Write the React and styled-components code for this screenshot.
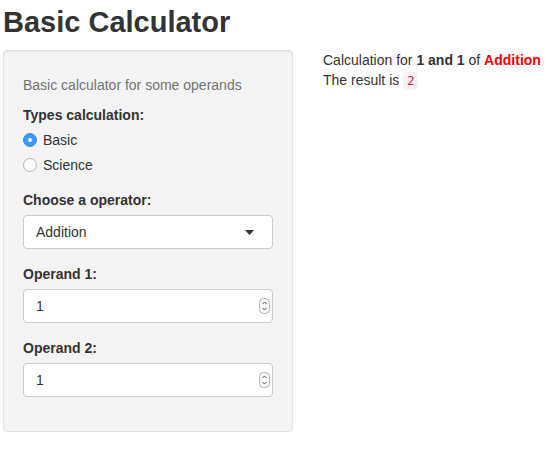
import React from 'react';
import styled, { createGlobalStyle } from 'styled-components';

const GlobalStyle = createGlobalStyle`
  body {
    margin: 0;
    font-family: "Liberation Sans", Arial, sans-serif;
    font-size: 14px;
    line-height: 20px;
    color: #333;
    background: #fff;
  }
`;

const Page = styled.div`
  padding: 6px 0 0 3px;
`;

const Title = styled.h2`
  margin: 0 0 11px;
  font-size: 29px;
  line-height: 33px;
  font-weight: 700;
  color: #333;
`;

const Row = styled.div`
  display: flex;
  align-items: flex-start;
`;

const Well = styled.div`
  width: 290px;
  box-sizing: border-box;
  padding: 19px;
  background: #f4f4f4;
  border: 1px solid #e3e3e3;
  border-radius: 4px;
  box-shadow: inset 0 1px 1px rgba(0, 0, 0, 0.05);
`;

const HelpText = styled.div`
  margin: 5px 0 10px;
  color: #737373;
`;

const FormGroup = styled.div`
  margin-bottom: 15px;
`;

const Label = styled.div`
  font-weight: 700;
  margin-bottom: 5px;
`;

const RadioRow = styled.div`
  display: flex;
  align-items: center;
  gap: 6px;
  margin-top: ${(p) => (p.$first ? '0' : '5px')};
`;

const RadioDot = styled.span`
  width: 14px;
  height: 14px;
  box-sizing: border-box;
  border-radius: 50%;
  display: flex;
  align-items: center;
  justify-content: center;
  background: ${(p) => (p.$checked ? '#3b99fc' : '#fff')};
  border: 1px solid ${(p) => (p.$checked ? '#3b8ee8' : '#b4b4b4')};
  &::after {
    content: '';
    display: ${(p) => (p.$checked ? 'block' : 'none')};
    width: 4px;
    height: 4px;
    border-radius: 50%;
    background: #fff;
  }
`;

const Control = styled.div`
  height: 34px;
  box-sizing: border-box;
  display: flex;
  align-items: center;
  justify-content: space-between;
  padding: 0 ${(p) => p.$padRight}px 0 12px;
  background: #fff;
  border: 1px solid #ccc;
  border-radius: 4px;
  color: #333;
`;

const Main = styled.div`
  margin-left: 30px;
`;

const Red = styled.b`
  color: #ff0000;
`;

const Code = styled.code`
  font-family: "DejaVu Sans Mono", "Liberation Mono", monospace;
  font-size: 12px;
  padding: 2px 4px;
  color: #c7254e;
  background: #f9f2f4;
  border-radius: 4px;
`;

const Caret = () => (
  <svg width="9" height="5" viewBox="0 0 9 5">
    <path d="M0 0 L9 0 L4.5 5 Z" fill="#333" />
  </svg>
);

const Spinner = () => (
  <svg width="11" height="16" viewBox="0 0 11 16">
    <rect x="0.5" y="0.5" width="10" height="15" rx="4" fill="#f8f8f8" stroke="#b5b5b5" />
    <path d="M3.5 6 L5.5 4 L7.5 6" fill="none" stroke="#555" strokeWidth="1" />
    <path d="M3.5 10 L5.5 12 L7.5 10" fill="none" stroke="#555" strokeWidth="1" />
  </svg>
);

const NumberInput = ({ value }) => (
  <Control $padRight={2}>
    <span>{value}</span>
    <Spinner />
  </Control>
);

export default function App() {
  return (
    <Page>
      <GlobalStyle />
      <Title>Basic Calculator</Title>
      <Row>
        <Well>
          <HelpText>Basic calculator for some operands</HelpText>
          <FormGroup>
            <Label>Types calculation:</Label>
            <RadioRow $first>
              <RadioDot $checked />
              <span>Basic</span>
            </RadioRow>
            <RadioRow>
              <RadioDot />
              <span>Science</span>
            </RadioRow>
          </FormGroup>
          <FormGroup>
            <Label>Choose a operator:</Label>
            <Control $padRight={18}>
              <span>Addition</span>
              <Caret />
            </Control>
          </FormGroup>
          <FormGroup>
            <Label>Operand 1:</Label>
            <NumberInput value="1" />
          </FormGroup>
          <FormGroup>
            <Label>Operand 2:</Label>
            <NumberInput value="1" />
          </FormGroup>
        </Well>
        <Main>
          <div>
            Calculation for <b>1 and 1</b> of <Red>Addition</Red>
          </div>
          <div>
            The result is <Code>2</Code>
          </div>
        </Main>
      </Row>
    </Page>
  );
}
